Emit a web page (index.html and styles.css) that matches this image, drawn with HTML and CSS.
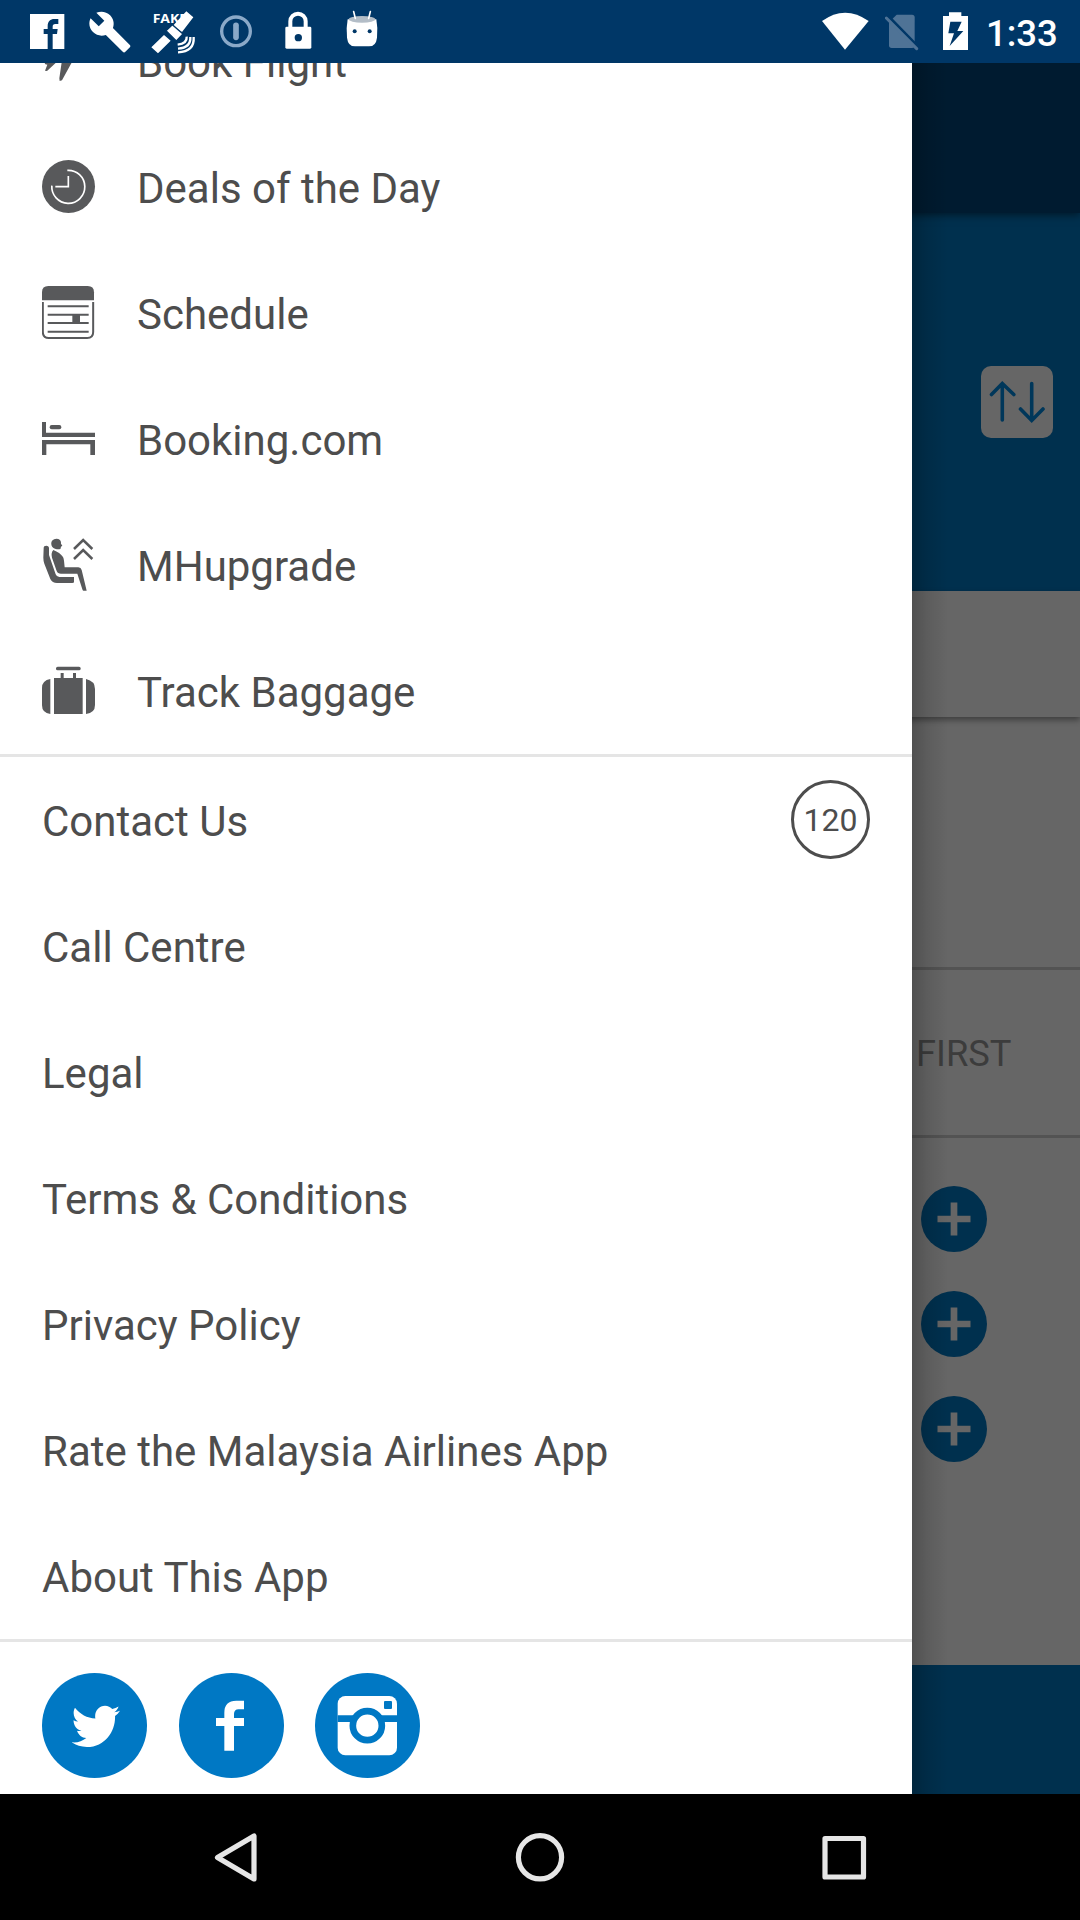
FILE: index.html
```html
<!DOCTYPE html>
<html lang="en">
<head>
<meta charset="utf-8">
<title>Malaysia Airlines</title>
<link rel="stylesheet" href="styles.css">
</head>
<body>
<header class="status">
  <div class="notifications">
    <svg viewBox="48 0 189 189"><path class="w" d="M90 42h103v105H90z"/><path d="M143 147v-45h-12V87h12V78c0-14 8-21 20-21h12v15h-9c-6 0-8 3-8 8v7h15l-2 15h-13v45z" fill="#003767"/></svg>
    <svg viewBox="0 0 63 63"><path class="w" transform="translate(8.6 9.6) scale(1.86)" d="M22.7 19l-9.1-9.1c.9-2.3.4-5-1.5-6.9-2-2-5-2.400-7.4-1.300L9 6 6 9 1.600 4.700C.4 7.100.9 10.100 2.900 12.100c1.900 1.900 4.600 2.400 6.900 1.500l9.100 9.100c.4.4 1 .4 1.400 0l2.300-2.300c.5-.4.5-1.100.1-1.400z"/></svg>
    <svg viewBox="426 0 189 189"><text class="fake" x="458" y="68" textLength="103" lengthAdjust="spacingAndGlyphs">FAKE</text><path class="w" d="M518 78l41-44 21 18-34 44zM454 142l38-37 20 17-38 38z"/><path d="M498 92l19-18 32 28-20 21z" fill="#fff" stroke="#003767" stroke-width="4"/><path d="M560 110q2 21-27 24M571 111q2 32-37 35M581 111q3 44-47 46" fill="none" stroke="#fff" stroke-width="7"/></svg>
    <svg viewBox="615 0 189 189"><g fill="none" stroke="#8ba9c8"><circle cx="708" cy="94" r="43" stroke-width="10"/><path d="M708 76v36" stroke-width="17" stroke-linecap="round"/></g></svg>
    <svg viewBox="804 0 189 189"><path d="M871 84V64a23 23 0 0 1 46 0v20" fill="none" stroke="#fff" stroke-width="12"/><rect class="w" x="856" y="80" width="78" height="66" rx="4"/><circle cx="895" cy="113" r="11" fill="#003767"/></svg>
    <svg viewBox="993 0 189 189"><path class="w" d="M1043 58h86q5 26 2 55-3 26-24 26h-42q-21 0-24-26-3-29 2-55z"/><ellipse cx="1086" cy="58" rx="40" ry="10" fill="#b3bdc7"/><path d="M1066 55l-5-20M1106 55l5-20" stroke="#fff" stroke-width="5" stroke-linecap="round"/><circle cx="1064" cy="94" r="6" fill="#003767"/><circle cx="1109" cy="94" r="6" fill="#003767"/></svg>
  </div>
  <div class="system">
    <svg class="wifi" viewBox="126 0 141 189"><path class="w" d="M126 63q69-50 140 0l-71 86z"/></svg>
    <svg class="sim" viewBox="315 0 102 189"><path d="M350 44h46q8 0 8 8v84q0 8-8 8h-61q-8 0-8-8V67z" fill="#4f7396"/><path d="M325 49l87 89" stroke="#003767" stroke-width="9"/><path d="M319 54l91 92" stroke="#4f7396" stroke-width="9" stroke-linecap="round"/></svg>
    <svg class="battery" viewBox="489 0 75 189"><path class="w" d="M489 48h18V37h37v11h20v102h-75z"/><path d="M511 65h34l-13 28h18l-41 45 13-38h-17z" fill="#003767"/></svg>
    <span class="time">1:33</span>
  </div>
</header>

<main class="screen">
  <div class="booking">
    <div class="toolbar"></div>
    <div class="route">
      <svg class="swap" viewBox="0 0 72 72"><path d="M21.300 54V18M10.500 28.500l10.800-11 11.500 11M50.700 17.500V54M39.500 43l11.200 11.500L62 43" fill="none" stroke="#00375a" stroke-width="3.600" stroke-linecap="round"/></svg>
    </div>
    <div class="tabs"></div>
    <div class="dates"></div>
    <div class="cabin">FIRST</div>
    <div class="passengers">
      <svg class="plus" viewBox="0 0 66 66"><circle cx="33" cy="33" r="33" fill="#00304e"/><path d="M16.500 33h33M33 16.500v33" stroke="#666" stroke-width="6.700"/></svg>
      <svg class="plus" viewBox="0 0 66 66"><circle cx="33" cy="33" r="33" fill="#00304e"/><path d="M16.500 33h33M33 16.500v33" stroke="#666" stroke-width="6.700"/></svg>
      <svg class="plus" viewBox="0 0 66 66"><circle cx="33" cy="33" r="33" fill="#00304e"/><path d="M16.500 33h33M33 16.500v33" stroke="#666" stroke-width="6.700"/></svg>
    </div>
    <div class="search"></div>
  </div>

  <nav class="drawer">
    <a class="row first"><svg class="icon" viewBox="126 102 162 162"><path d="M134 190l30-30 50-50 60-5-40 60-20 25-28 51-7 2-1-8 7-48h-16l-28 26-6-1 7-18-6-1z"/></svg><span>Book Flight</span></a>
    <a class="row"><svg class="icon" viewBox="126 90 162 162"><circle cx="205.500" cy="169.500" r="79.500"/><path d="M202 121a49.500 49.500 0 1 1-46.500 46M205 138v32h-39" fill="none" stroke="#fff" stroke-width="5"/></svg><span>Deals of the Day</span></a>
    <a class="row"><svg class="icon" viewBox="126 468 162 162"><path d="M126 511v-24q0-19 19-19h118q19 0 19 19v24z"/><path d="M128.500 516v90q0 18 18 18h115q18 0 18-18v-90M143 529h123M143 554h123M143 579h123M143 605h123" fill="none" stroke="#58595b" stroke-width="6"/><path d="M217 554h23v25h-23z"/></svg><span>Schedule</span></a>
    <a class="row"><svg class="icon" viewBox="126 96 162 162"><path d="M126 126h12v32h147v13H126zM126 180h159v45h-14v-32H139v32h-13z"/><rect x="149" y="135" width="35" height="13" rx="6"/></svg><span>Booking.com</span></a>
    <a class="row"><svg class="icon" viewBox="126 474 162 162"><path d="M156 482q8-8 19-5 9 4 8 14l4 6-4 3q0 8-6 8-14 0-20-7-6-10-1-19z"/><path d="M131 504q0-7 8-7t8 8v20l20 58q3 8 11 8h44v16q-1 2-5 2h-46q-14 0-20-12l-18-46q-3-8-3-18z"/><path d="M160 510q20 8 29 21 2 4 3 11l2 20h41q8 0 10 8l15 62h-10q-2 0-3-4l-15-47h-49q-10 0-13-8l-14-40q-4-14 4-23z"/><path d="M222 507l27.500-27 27.500 27M222 537l27.500-27 27.500 27" fill="none" stroke="#58595b" stroke-width="7.500"/></svg><span>MHupgrade</span></a>
    <a class="row"><svg class="icon" viewBox="126 852 162 162"><rect x="168" y="860" width="74" height="11" rx="5"/><path d="M182 879h9v15h28v-15h9v15h20v108h-86V894h20zM151 897v105q-25-3-25-26v-52q0-23 25-27zM258 897q27 6 27 30v48q0 24-27 27z"/></svg><span>Track Baggage</span></a>
    <hr>
    <a class="row"><span>Contact Us</span><span class="badge">120</span></a>
    <a class="row"><span>Call Centre</span></a>
    <a class="row"><span>Legal</span></a>
    <a class="row"><span>Terms &amp; Conditions</span></a>
    <a class="row"><span>Privacy Policy</span></a>
    <a class="row"><span>Rate the Malaysia Airlines App</span></a>
    <a class="row"><span>About This App</span></a>
    <hr>
    <div class="social">
      <svg viewBox="126 159 315 315"><circle cx="283.500" cy="316.500" r="157.500" fill="#0078c4"/><path class="w" transform="translate(215 243) scale(6.04 6.35)" d="M23.954 4.569c-.885.389-1.830.654-2.825.775 1.014-.611 1.794-1.574 2.163-2.723-.951.555-2.005.959-3.127 1.184-.896-.959-2.173-1.559-3.591-1.559-2.717 0-4.920 2.203-4.920 4.917 0 .390.045.765.127 1.124C7.691 8.094 4.066 6.130 1.640 3.161c-.427.722-.666 1.561-.666 2.475 0 1.710.870 3.213 2.188 4.096-.807-.026-1.566-.248-2.228-.616v.061c0 2.385 1.693 4.374 3.946 4.827-.413.111-.849.171-1.296.171-.314 0-.615-.030-.916-.086.631 1.953 2.445 3.377 4.604 3.417-1.680 1.319-3.809 2.105-6.102 2.105-.390 0-.779-.023-1.170-.067 2.189 1.394 4.768 2.209 7.557 2.209 9.054 0 13.999-7.496 13.999-13.986 0-.209 0-.420-.015-.630.961-.689 1.800-1.560 2.460-2.548z"/></svg>
      <svg viewBox="536 159 315 315"><circle cx="693.500" cy="316.500" r="157.500" fill="#0078c4"/><path class="w" d="M672 392v-74h-25v-24h25v-16q0-36 36-36h23v26h-16q-14 0-14 14v12h30v24h-30v74z"/></svg>
      <svg viewBox="945 159 315 315"><circle cx="1102.500" cy="316.500" r="157.500" fill="#0078c4"/><rect class="w" x="1013" y="228" width="178" height="178" rx="23"/><path d="M1013 286h178v20h-178z" fill="#0078c4"/><circle cx="1102" cy="317" r="43.500" fill="#fff" stroke="#0078c4" stroke-width="20"/><rect x="1152" y="243" width="24" height="24" rx="3" fill="#0078c4"/></svg>
    </div>
  </nav>
</main>

<footer class="navbar">
  <svg viewBox="0 0 60 60"><path d="M11.500 30.500L48 9v43z"/></svg>
  <svg viewBox="0 0 60 60"><circle cx="30" cy="30.300" r="21.600"/></svg>
  <svg viewBox="0 0 60 60"><rect x="11" y="11.500" width="38.500" height="38.500"/></svg>
</footer>
</body>
</html>
```
FILE: styles.css
```css
* { box-sizing: border-box; }
body {
  margin: 0;
  width: 1080px;
  height: 1920px;
  overflow: hidden;
  display: flex;
  flex-direction: column;
  font-family: Roboto, sans-serif;
  background: #000;
}
svg { display: block; flex: none; }
.w { fill: #fff; }

/* Status bar */
.status {
  height: 63px;
  flex: none;
  display: flex;
  justify-content: space-between;
  padding-left: 16px;
  background: #003767;
}
.notifications { display: flex; }
.notifications svg { width: 63px; height: 63px; }
.fake { font: bold 36px "Open Sans", sans-serif; fill: #fff; }
.system { display: flex; align-items: center; }
.system svg { height: 63px; }
.wifi { width: 47px; margin-right: 16px; }
.sim { width: 34px; margin-right: 24px; }
.battery { width: 25px; margin-right: 18px; }
.time {
  width: 94px;
  color: #fff;
  font-size: 36.5px;
  font-weight: 500;
  line-height: 42px;
  padding-top: 4px;
}

/* Dimmed booking screen behind the drawer */
.screen { position: relative; height: 1731px; flex: none; overflow: hidden; }
.booking {
  height: 100%;
  display: flex;
  flex-direction: column;
  isolation: isolate;
  background: #666;
}
.toolbar {
  height: 150px;
  background: #001b30;
  box-shadow: 0 2px 8px rgba(0, 0, 0, .5);
  z-index: 1;
}
.route {
  height: 378px;
  padding: 153px 27px 0 0;
  display: flex;
  justify-content: flex-end;
  background: #00304e;
}
.swap { width: 72px; height: 72px; background: #666; border-radius: 10px; }
.tabs { height: 126px; background: #666; box-shadow: 0 3px 6px rgba(0, 0, 0, .4); }
.dates { height: 253px; border-bottom: 3px solid #535353; }
.cabin {
  height: 168px;
  padding-left: 916px;
  border-bottom: 3px solid #535353;
  color: #3c3c3c;
  font-size: 36.3px;
  line-height: 168px;
}
.passengers {
  flex: 1;
  display: flex;
  flex-direction: column;
  gap: 39px;
  padding: 48px 0 0 920.5px;
}
.plus { width: 66px; height: 66px; }
.search { height: 129px; background: #00304e; }

/* Navigation drawer */
.drawer {
  position: absolute;
  top: 0;
  left: 0;
  width: 912px;
  height: 100%;
  overflow: hidden;
  background: #fff;
}
.screen::after {
  content: "";
  position: absolute;
  top: 0;
  bottom: 0;
  left: 912px;
  width: 36px;
  background: linear-gradient(to right, rgba(0, 0, 0, .22), rgba(0, 0, 0, .1) 40%, transparent);
}
.row {
  height: 126px;
  display: flex;
  align-items: center;
  gap: 41px;
  padding: 0 42px;
  color: #4d4d4d;
  font-size: 42px;
  line-height: 50px;
}
.row span { padding-top: 4px; }
.first { margin-top: -65px; }
.icon { width: 54px; height: 54px; fill: #58595b; }
hr { height: 3px; margin: 0; border: 0; background: #e5e5e5; }
.row .badge {
  width: 79px;
  height: 79px;
  margin: 0 0 1px auto;
  padding: 1px 0 0;
  border: 3px solid #4d4d4d;
  border-radius: 50%;
  font-size: 32px;
  line-height: 73px;
  text-align: center;
}
.social { display: flex; gap: 31.5px; padding: 31px 42px 0; }
.social svg { width: 105px; height: 105px; }

/* System navigation */
.navbar {
  height: 126px;
  flex: none;
  display: flex;
  align-items: center;
  justify-content: space-between;
  padding: 0 206px;
}
.navbar svg {
  width: 60px;
  height: 60px;
  fill: none;
  stroke: #e6e6e6;
  stroke-width: 5.2;
  stroke-linejoin: round;
}
```
